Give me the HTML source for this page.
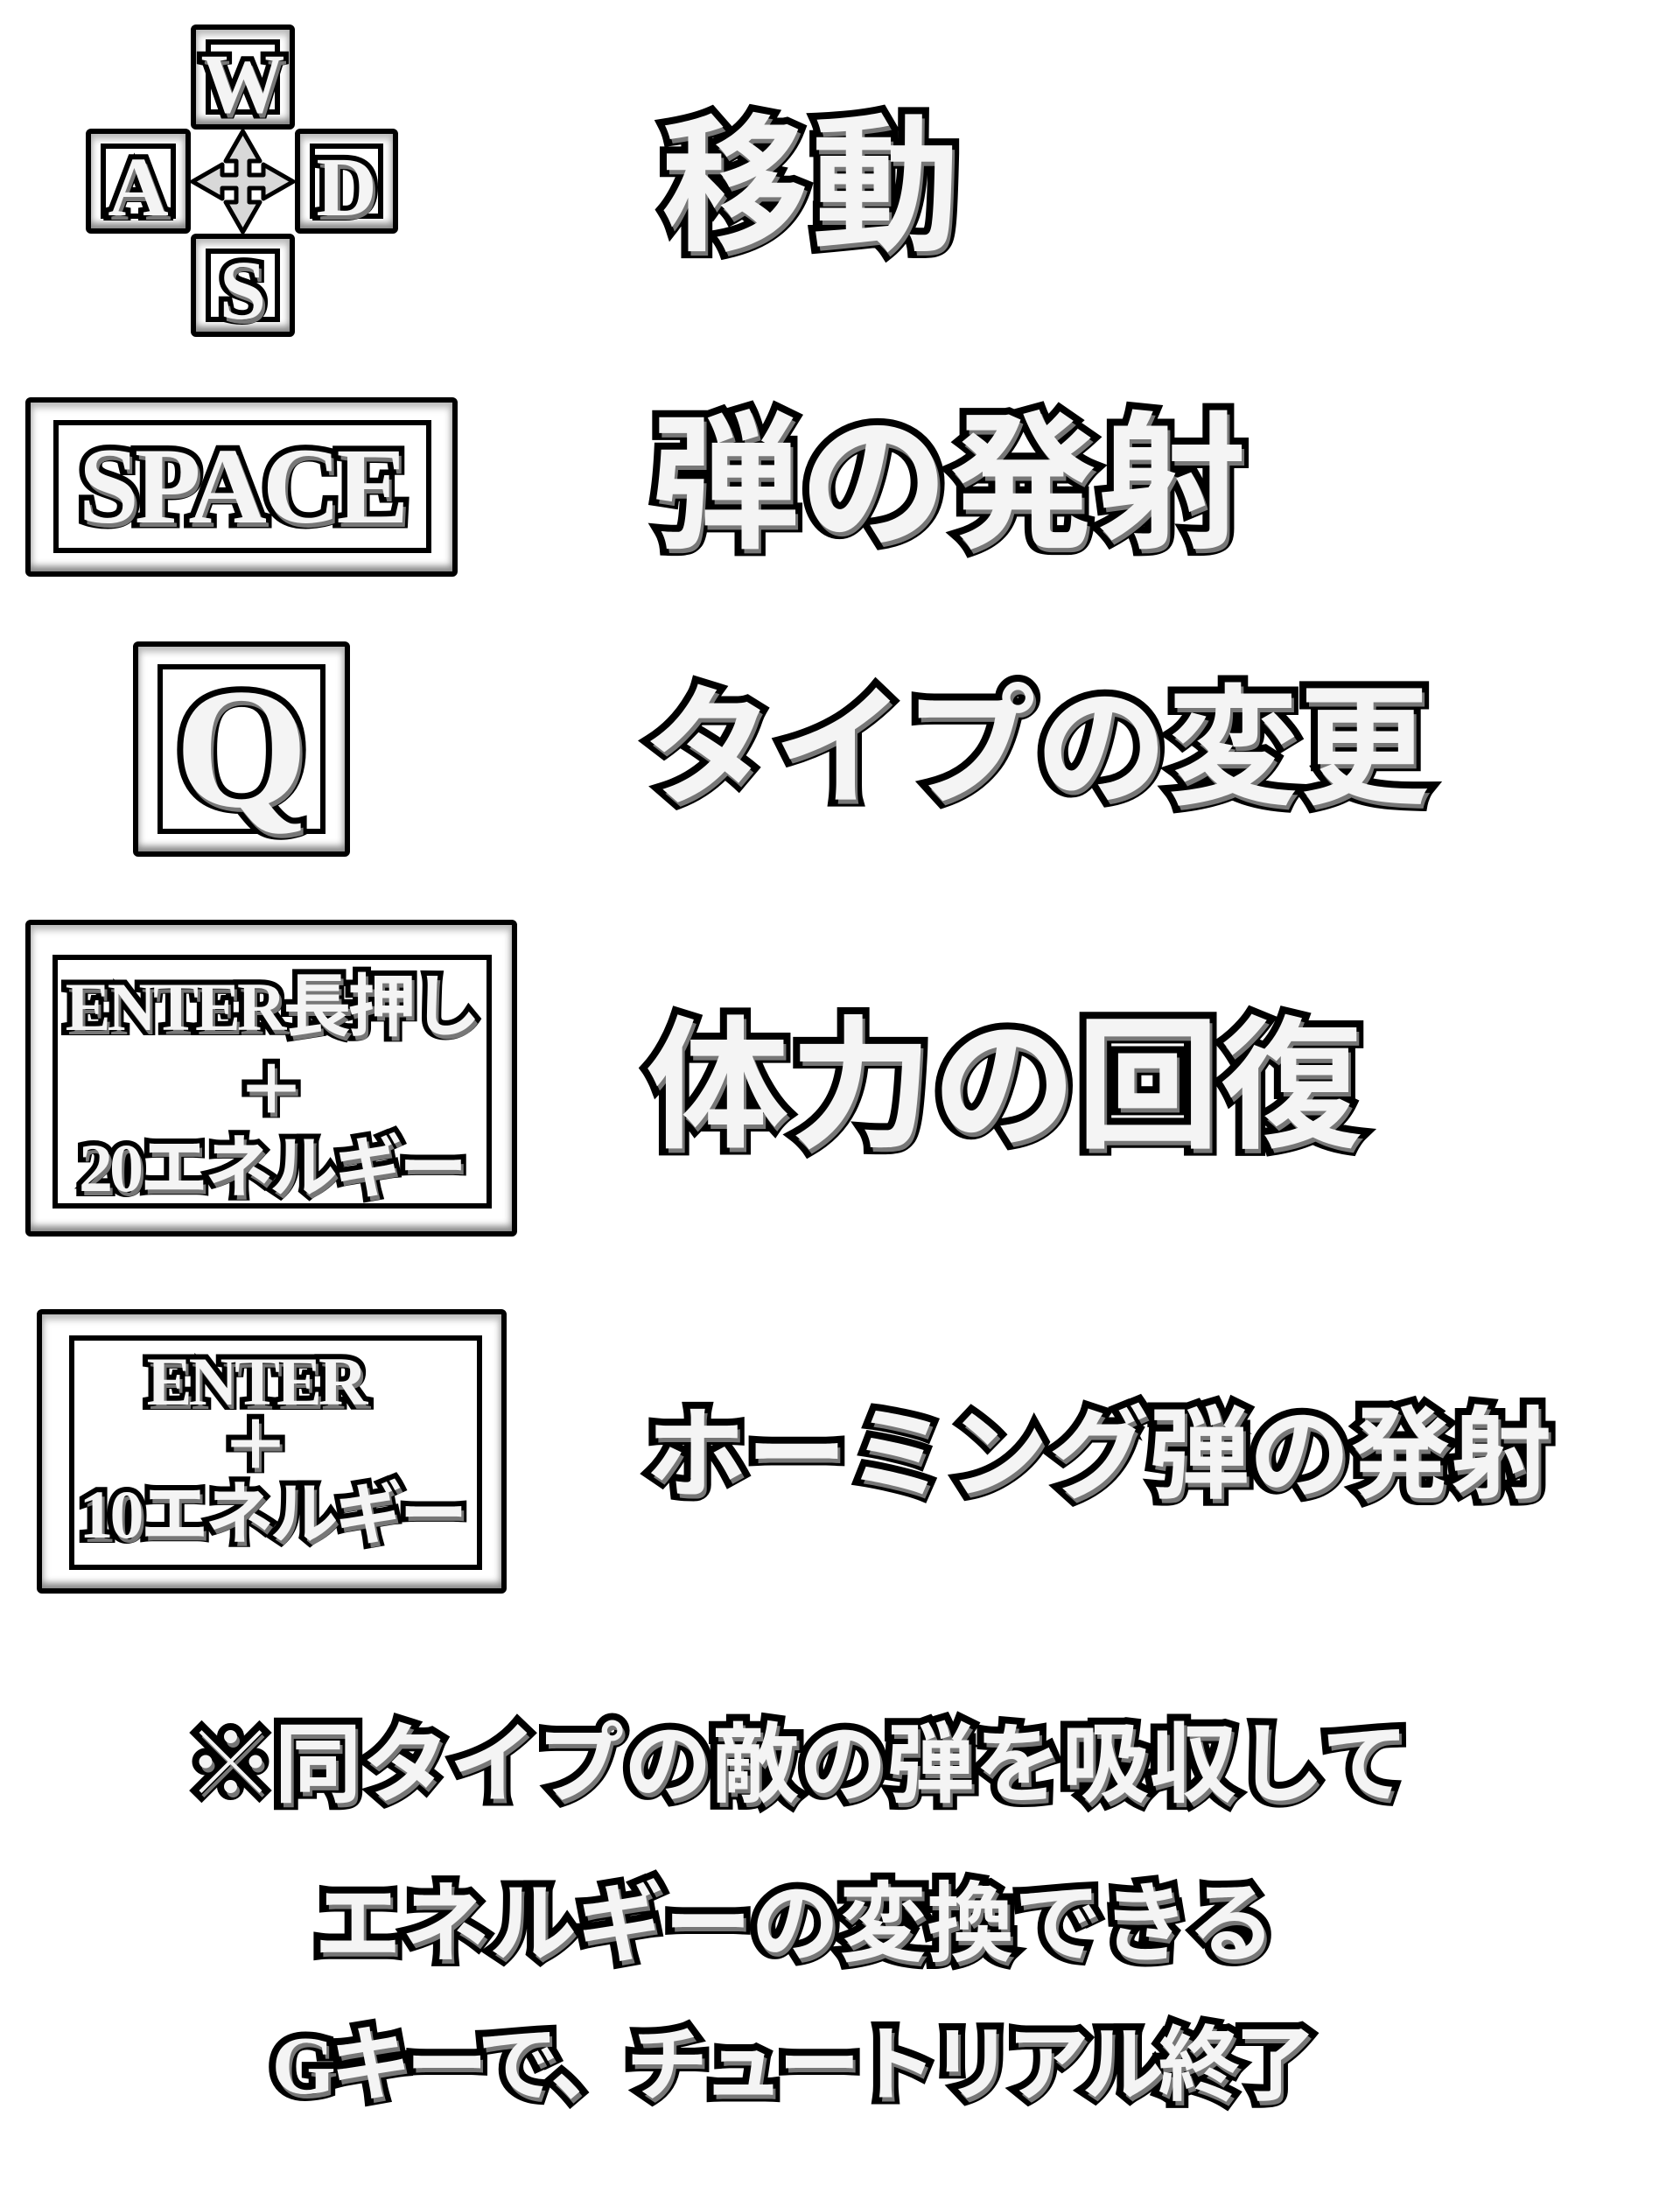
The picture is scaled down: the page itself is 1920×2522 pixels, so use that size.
<!DOCTYPE html>
<html><head><meta charset="utf-8">
<style>
html,body{margin:0;padding:0;background:#fff;}
body{width:1920px;height:2522px;position:relative;overflow:hidden;}
.t{position:absolute;white-space:nowrap;color:#f4f4f4;font-family:"Liberation Serif","Noto Sans CJK JP",serif;font-weight:bold;
 -webkit-text-stroke:16px #000;paint-order:stroke fill;text-shadow:3px 5px 0 #777;line-height:1;}
.jp{font-family:"Liberation Serif","Noto Sans CJK JP",sans-serif;font-weight:bold;}
.k{position:absolute;box-sizing:border-box;border:6px solid #000;border-radius:6px;background:#fff;
 box-shadow:inset 0 -10px 8px -4px #888, inset 0 10px 8px -4px #bbb, inset 8px 0 8px -6px #bbb, inset -8px 0 8px -6px #aaa;}
.in{position:absolute;box-sizing:border-box;border:6px solid #000;background:#fff;}
</style></head><body>

<!-- WASD -->
<div class="k" style="left:218px;top:28px;width:119px;height:120px"><div class="in" style="left:11px;top:11px;width:85px;height:86px"></div></div>
<div class="k" style="left:98px;top:147px;width:120px;height:120px"><div class="in" style="left:11px;top:11px;width:86px;height:86px"></div></div>
<div class="k" style="left:337px;top:147px;width:118px;height:120px"><div class="in" style="left:11px;top:11px;width:84px;height:86px"></div></div>
<div class="k" style="left:218px;top:267px;width:119px;height:118px"><div class="in" style="left:11px;top:11px;width:85px;height:84px"></div></div>
<div class="t" style="left:218px;top:48px;width:119px;text-align:center;font-size:96px;-webkit-text-stroke:12px #000">W</div>
<div class="t" style="left:98px;top:166px;width:120px;text-align:center;font-size:96px;-webkit-text-stroke:12px #000">A</div>
<div class="t" style="left:337px;top:166px;width:118px;text-align:center;font-size:96px;-webkit-text-stroke:12px #000">D</div>
<div class="t" style="left:218px;top:284px;width:119px;text-align:center;font-size:96px;-webkit-text-stroke:12px #000">S</div>
<svg style="position:absolute;left:218px;top:148px" width="119" height="119" viewBox="0 0 119 119">
<path d="M59.5 2 L79 36 L67 36 L67 52 L83 52 L83 40 L117 59.5 L83 79 L83 67 L67 67 L67 83 L79 83 L59.5 117 L40 83 L52 83 L52 67 L36 67 L36 79 L2 59.5 L36 40 L36 52 L52 52 L52 36 L40 36 Z" fill="#d8d8d8" stroke="#000" stroke-width="5" stroke-linejoin="round"/>
</svg>
<div class="t jp" style="left:755px;top:130px;font-size:170px;letter-spacing:2px">移動</div>

<!-- SPACE -->
<div class="k" style="left:29px;top:454px;width:494px;height:205px"><div class="in" style="left:26px;top:20px;width:432px;height:152px"></div></div>
<div class="t" style="left:29px;top:494px;width:494px;text-align:center;font-size:124px;-webkit-text-stroke:13px #000;letter-spacing:-5px">SPACE</div>
<div class="t jp" style="left:744px;top:470px;font-size:170px">弾の発射</div>

<!-- Q -->
<div class="k" style="left:152px;top:733px;width:248px;height:246px"><div class="in" style="left:22px;top:20px;width:192px;height:194px"></div></div>
<div class="t" style="left:152px;top:758px;width:248px;text-align:center;font-size:196px;-webkit-text-stroke:14px #000">Q</div>
<div class="t jp" style="left:734px;top:782px;font-size:150px">タイプの変更</div>

<!-- ENTER 1 -->
<div class="k" style="left:29px;top:1051px;width:562px;height:362px"><div class="in" style="left:25px;top:34px;width:502px;height:290px"></div></div>
<div class="t jp" style="left:29px;top:1112px;width:562px;text-align:center;font-size:78px;-webkit-text-stroke:12px #000;letter-spacing:-4px">ENTER長押し</div>
<div class="t jp" style="left:29px;top:1208px;width:562px;text-align:center;font-size:78px;-webkit-text-stroke:12px #000">＋</div>
<div class="t jp" style="left:29px;top:1296px;width:562px;text-align:center;font-size:78px;-webkit-text-stroke:12px #000;letter-spacing:-4px">20エネルギー</div>
<div class="t jp" style="left:738px;top:1162px;font-size:164px">体力の回復</div>

<!-- ENTER 2 -->
<div class="k" style="left:42px;top:1496px;width:537px;height:325px"><div class="in" style="left:31px;top:24px;width:472px;height:268px"></div></div>
<div class="t jp" style="left:42px;top:1540px;width:500px;text-align:center;font-size:78px;-webkit-text-stroke:12px #000;letter-spacing:-4px">ENTER</div>
<div class="t jp" style="left:42px;top:1614px;width:500px;text-align:center;font-size:78px;-webkit-text-stroke:12px #000">＋</div>
<div class="t jp" style="left:42px;top:1692px;width:537px;text-align:center;font-size:78px;-webkit-text-stroke:12px #000;letter-spacing:-4px">10エネルギー</div>
<div class="t jp" style="left:738px;top:1606px;font-size:115px">ホーミング弾の発射</div>

<!-- bottom -->
<div class="t jp" style="left:0;width:1824px;text-align:center;top:1968px;font-size:100px">※同タイプの敵の弾を吸収して</div>
<div class="t jp" style="left:0;width:1816px;text-align:center;top:2150px;font-size:100px">エネルギーの変換できる</div>
<div class="t jp" style="left:0;width:1808px;text-align:center;top:2314px;font-size:94px;letter-spacing:-7px">Gキーで、チュートリアル終了</div>
</body></html>
